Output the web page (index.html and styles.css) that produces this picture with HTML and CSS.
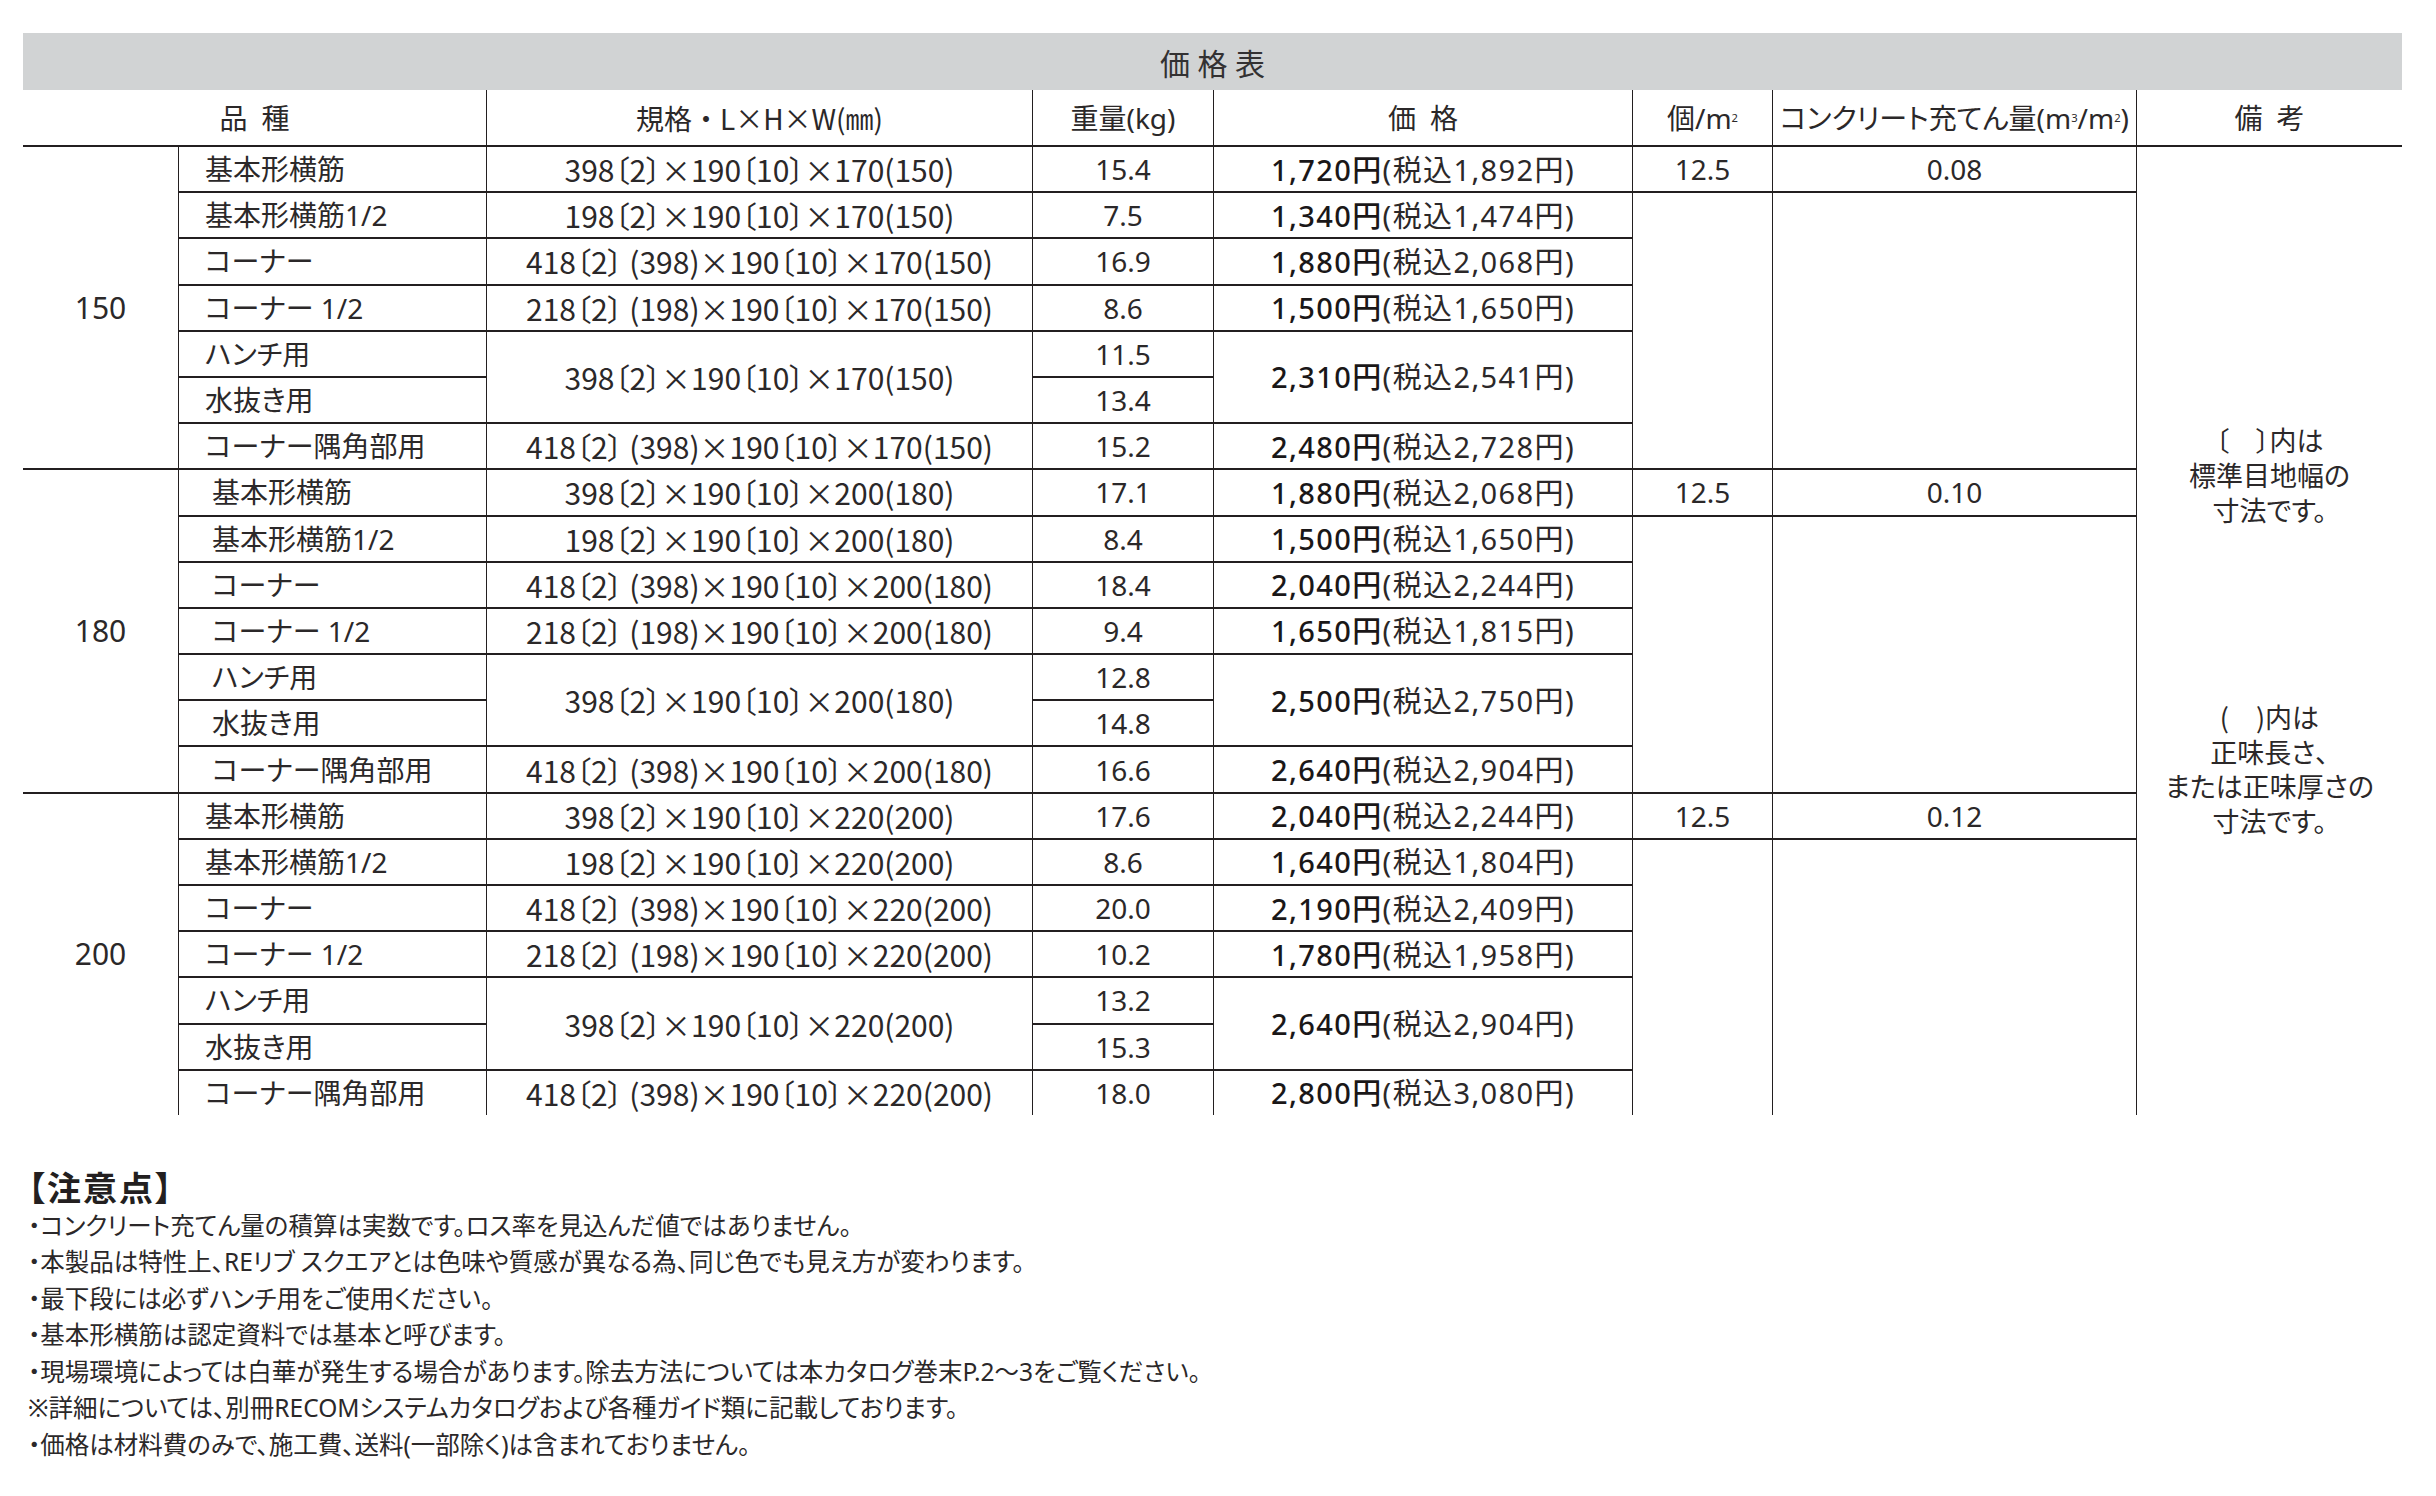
FILE: index.html
```html
<!DOCTYPE html>
<html lang="ja">
<head>
<meta charset="utf-8">
<title>価格表</title>
<link rel="stylesheet" href="styles.css">
</head>
<body>
<div class="page">
  <section class="sheet">
    <div class="title">価格表</div>
    <div class="grid">
      <div class="cell head first c2">品&ensp;種</div>
      <div class="cell head cjk">規格・L×H×W(㎜)</div>
      <div class="cell head">重量(kg)</div>
      <div class="cell head">価&ensp;格</div>
      <div class="cell head">個/m<sup>2</sup></div>
      <div class="cell head">コンクリート充てん量(m<sup>3</sup>/m<sup>2</sup>)</div>
      <div class="cell head">備&ensp;考</div>

      <!-- 150 -->
      <div class="cell first grp r7">150</div>
      <div class="cell name">基本形横筋</div>
      <div class="cell spec">398〔2〕×190〔10〕×170(150)</div>
      <div class="cell">15.4</div>
      <div class="cell price"><b>1,720円</b>(税込1,892円)</div>
      <div class="cell">12.5</div>
      <div class="cell">0.08</div>
      <div class="cell remarks r21">〔　〕内は<br>標準目地幅の<br>寸法です。<br><br><br><br><br><br>(　)内は<br>正味長さ、<br>または正味厚さの<br>寸法です。</div>

      <div class="cell name">基本形横筋1/2</div>
      <div class="cell spec">198〔2〕×190〔10〕×170(150)</div>
      <div class="cell">7.5</div>
      <div class="cell price"><b>1,340円</b>(税込1,474円)</div>
      <div class="cell r6"></div>
      <div class="cell r6"></div>

      <div class="cell name">コーナー</div>
      <div class="cell spec">418〔2〕 (398)×190〔10〕×170(150)</div>
      <div class="cell">16.9</div>
      <div class="cell price"><b>1,880円</b>(税込2,068円)</div>

      <div class="cell name">コーナー 1/2</div>
      <div class="cell spec">218〔2〕 (198)×190〔10〕×170(150)</div>
      <div class="cell">8.6</div>
      <div class="cell price"><b>1,500円</b>(税込1,650円)</div>

      <div class="cell name">ハンチ用</div>
      <div class="cell spec r2">398〔2〕×190〔10〕×170(150)</div>
      <div class="cell">11.5</div>
      <div class="cell price r2"><b>2,310円</b>(税込2,541円)</div>
      <div class="cell name">水抜き用</div>
      <div class="cell">13.4</div>

      <div class="cell name">コーナー隅角部用</div>
      <div class="cell spec">418〔2〕 (398)×190〔10〕×170(150)</div>
      <div class="cell">15.2</div>
      <div class="cell price"><b>2,480円</b>(税込2,728円)</div>

      <!-- 180 -->
      <div class="cell first grp r7">180</div>
      <div class="cell name ind">基本形横筋</div>
      <div class="cell spec">398〔2〕×190〔10〕×200(180)</div>
      <div class="cell">17.1</div>
      <div class="cell price"><b>1,880円</b>(税込2,068円)</div>
      <div class="cell">12.5</div>
      <div class="cell">0.10</div>

      <div class="cell name ind">基本形横筋1/2</div>
      <div class="cell spec">198〔2〕×190〔10〕×200(180)</div>
      <div class="cell">8.4</div>
      <div class="cell price"><b>1,500円</b>(税込1,650円)</div>
      <div class="cell r6"></div>
      <div class="cell r6"></div>

      <div class="cell name ind">コーナー</div>
      <div class="cell spec">418〔2〕 (398)×190〔10〕×200(180)</div>
      <div class="cell">18.4</div>
      <div class="cell price"><b>2,040円</b>(税込2,244円)</div>

      <div class="cell name ind">コーナー 1/2</div>
      <div class="cell spec">218〔2〕 (198)×190〔10〕×200(180)</div>
      <div class="cell">9.4</div>
      <div class="cell price"><b>1,650円</b>(税込1,815円)</div>

      <div class="cell name ind">ハンチ用</div>
      <div class="cell spec r2">398〔2〕×190〔10〕×200(180)</div>
      <div class="cell">12.8</div>
      <div class="cell price r2"><b>2,500円</b>(税込2,750円)</div>
      <div class="cell name ind">水抜き用</div>
      <div class="cell">14.8</div>

      <div class="cell name ind">コーナー隅角部用</div>
      <div class="cell spec">418〔2〕 (398)×190〔10〕×200(180)</div>
      <div class="cell">16.6</div>
      <div class="cell price"><b>2,640円</b>(税込2,904円)</div>

      <!-- 200 -->
      <div class="cell first grp r7">200</div>
      <div class="cell name">基本形横筋</div>
      <div class="cell spec">398〔2〕×190〔10〕×220(200)</div>
      <div class="cell">17.6</div>
      <div class="cell price"><b>2,040円</b>(税込2,244円)</div>
      <div class="cell">12.5</div>
      <div class="cell">0.12</div>

      <div class="cell name">基本形横筋1/2</div>
      <div class="cell spec">198〔2〕×190〔10〕×220(200)</div>
      <div class="cell">8.6</div>
      <div class="cell price"><b>1,640円</b>(税込1,804円)</div>
      <div class="cell r6"></div>
      <div class="cell r6"></div>

      <div class="cell name">コーナー</div>
      <div class="cell spec">418〔2〕 (398)×190〔10〕×220(200)</div>
      <div class="cell">20.0</div>
      <div class="cell price"><b>2,190円</b>(税込2,409円)</div>

      <div class="cell name">コーナー 1/2</div>
      <div class="cell spec">218〔2〕 (198)×190〔10〕×220(200)</div>
      <div class="cell">10.2</div>
      <div class="cell price"><b>1,780円</b>(税込1,958円)</div>

      <div class="cell name">ハンチ用</div>
      <div class="cell spec r2">398〔2〕×190〔10〕×220(200)</div>
      <div class="cell">13.2</div>
      <div class="cell price r2"><b>2,640円</b>(税込2,904円)</div>
      <div class="cell name">水抜き用</div>
      <div class="cell">15.3</div>

      <div class="cell name">コーナー隅角部用</div>
      <div class="cell spec">418〔2〕 (398)×190〔10〕×220(200)</div>
      <div class="cell">18.0</div>
      <div class="cell price"><b>2,800円</b>(税込3,080円)</div>
    </div>
  </section>

  <section class="notes">
    <h2 class="notes-title">【注意点】</h2>
    <p>・コンクリート充てん量の積算は実数です。ロス率を見込んだ値ではありません。</p>
    <p>・本製品は特性上、REリブ スクエアとは色味や質感が異なる為、同じ色でも見え方が変わります。</p>
    <p>・最下段には必ずハンチ用をご使用ください。</p>
    <p>・基本形横筋は認定資料では基本と呼びます。</p>
    <p>・現場環境によっては白華が発生する場合があります。除去方法については本カタログ巻末P.2～3をご覧ください。</p>
    <p>※詳細については、別冊RECOMシステムカタログおよび各種ガイド類に記載しております。</p>
    <p>・価格は材料費のみで、施工費、送料(一部除く)は含まれておりません。</p>
  </section>
</div>
</body>
</html>
```

FILE: styles.css
```css
html, body {
  margin: 0;
  padding: 0;
  background: #ffffff;
}

body {
  color: #231f20;
  font-family: "Noto Sans", "Noto Sans CJK JP", sans-serif;
}

.page {
  padding: 33px 0 0 23px;
}

.sheet {
  width: 2379px;
}

.title {
  height: 57px;
  background: #d1d3d4;
  display: flex;
  align-items: center;
  justify-content: center;
  font-family: "Noto Sans CJK JP", sans-serif;
  font-size: 30px;
  letter-spacing: 0.25em;
  padding-left: 0.25em;
  box-sizing: border-box;
  color: #333132;
}

.grid {
  display: grid;
  grid-template-columns: 155px 308px 546px 181px 419px 140px 364px 266px;
  grid-template-rows: 55px repeat(21, 46.19px);
  font-feature-settings: "palt";
}

.cell {
  display: flex;
  align-items: center;
  justify-content: center;
  box-sizing: border-box;
  border-left: 1px solid #231f20;
  border-top: 2px solid #231f20;
  font-size: 28px;
  line-height: 1;
  white-space: nowrap;
  color: #2b2829;
}

.cell.head {
  border-top: none;
}

.cell.first {
  border-left: none;
}

.cell.cjk {
  font-family: "Noto Sans CJK JP", sans-serif;
  font-feature-settings: normal;
}

.c2 { grid-column: span 2; }
.r2 { grid-row: span 2; }
.r6 { grid-row: span 6; }
.r7 { grid-row: span 7; }
.r21 { grid-row: span 21; }

.grp {
  font-size: 30px;
}

.name {
  justify-content: flex-start;
  padding-left: 26px;
}

.name.ind {
  padding-left: 33px;
}

.spec {
  font-family: "Noto Sans CJK JP", sans-serif;
  font-size: 30px;
}

.price {
  font-size: 29px;
  letter-spacing: 1.4px;
}

.price b {
  font-weight: 500;
  color: #1a1718;
}

.head sup {
  font-size: 0.4em;
  line-height: 0;
  vertical-align: 1.3em;
}

.remarks {
  font-family: "Noto Sans CJK JP", sans-serif;
  font-size: 27px;
  line-height: 34.6px;
  text-align: center;
}

.notes {
  margin-top: 51px;
  padding-left: 5px;
  font-feature-settings: "palt";
}

.notes-title {
  margin: 0;
  font-family: "Noto Sans CJK JP", sans-serif;
  font-size: 34px;
  font-weight: 700;
  line-height: 42px;
  letter-spacing: 2px;
}

.notes p {
  margin: 0;
  font-size: 24.5px;
  line-height: 36.5px;
  color: #2b2829;
}
```
